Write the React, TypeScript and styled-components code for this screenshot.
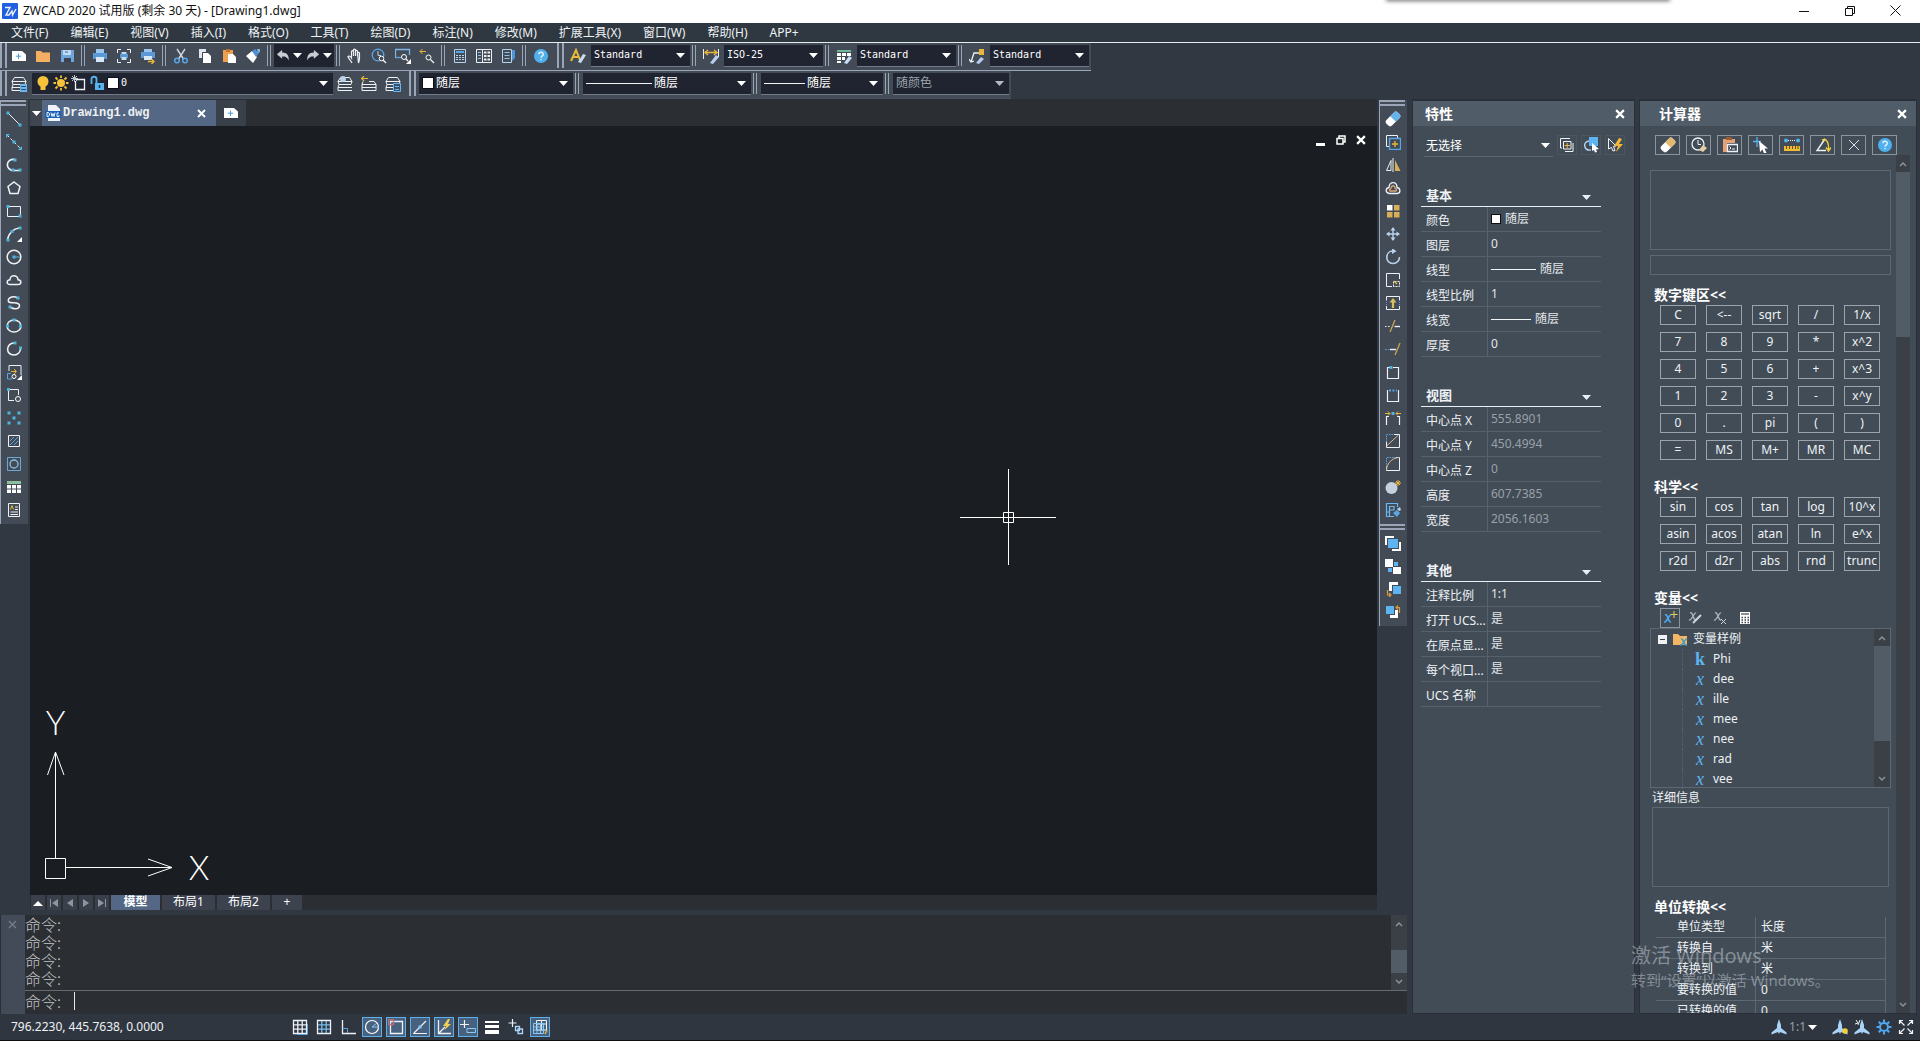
import React from 'react';
import styled, { createGlobalStyle, css } from 'styled-components';

const ui = "'Noto Sans', 'Noto Sans CJK SC', sans-serif";
const mono = "'DejaVu Sans Mono', 'Noto Sans CJK SC', monospace";

const c = {
  frame: '#323842',
  menu: '#2f3840',
  bar: '#434b57',
  field: '#202430',
  grip: '#9aa6b8',
  canvas: '#1a1d22',
  strip: '#2b2e33',
  tab: '#546784',
  panel: '#424c57',
  header: '#505c67',
  line: '#5d6872',
  keyLine: '#9ba4ac',
  text: '#eef2f5',
  dim: '#98a1a9',
  blue: '#5db4f0',
  gold: '#e8b83c',
};

const GlobalStyle = createGlobalStyle`
  *, *::before, *::after { box-sizing: border-box; }
  body { margin: 0; background: ${c.frame}; color: ${c.text}; font: 12px/16px ${ui}; overflow: hidden; }
  button, select, input, textarea { font: inherit; color: inherit; margin: 0; padding: 0; border: 0; background: none; border-radius: 0; outline: 0; }
  svg { display: block; flex: none; }
  ul { list-style: none; margin: 0; padding: 0; }
  h2, h3 { margin: 0; }
`;

/* ---------- drawing helpers ---------- */

type StrokeProps = { d: string; k?: string; w?: number; dash?: string };
const S = ({ d, k = '#eef2f6', w = 1, dash }: StrokeProps) => (
  <path d={d} stroke={k} strokeWidth={w} strokeDasharray={dash} fill="none" />
);
const F = ({ d, k = '#ffffff' }: { d: string; k?: string }) => <path d={d} fill={k} />;
const Dot = ({ x, y, k = '#4fb3dc' }: { x: number; y: number; k?: string }) => (
  <rect x={x - 1.5} y={y - 1.5} width={3} height={3} fill={k} />
);
const Icon = ({ children, size = 16 }: { children: React.ReactNode; size?: number }) => (
  <svg width={size} height={size} viewBox="0 0 16 16" aria-hidden="true">
    {children}
  </svg>
);
const Caret = ({ k = '#ffffff' }: { k?: string }) => (
  <svg width={9} height={5} viewBox="0 0 9 5" aria-hidden="true">
    <path d="M0 0H9L4.5 5Z" fill={k} />
  </svg>
);
const Cross = ({ size = 9, w = 2, k = '#ffffff' }: { size?: number; w?: number; k?: string }) => (
  <svg width={size} height={size} viewBox="0 0 9 9" aria-hidden="true">
    <path d="M1 1L8 8M8 1L1 8" stroke={k} strokeWidth={w} />
  </svg>
);
const Chevron = ({ down }: { down?: boolean }) => (
  <svg width={8} height={6} viewBox="0 0 8 6" aria-hidden="true">
    <path d={down ? 'M1 1L4 4L7 1' : 'M1 5L4 2L7 5'} stroke="#8d959c" strokeWidth={1.4} fill="none" />
  </svg>
);

const layersIcon = (
  <>
    <S d="M3.500 1.500H12.500L15 5.500H1Z M2 8.500H14 M1 5.500L2 8.500L1 11.500 M15 5.500L14 8.500 M1 11.500H15 M1 11.500V14.500H15" />
  </>
);
const helpIcon = (
  <>
    <circle cx={8} cy={8} r={7} fill="#4fb0f0" />
    <S d="M5.800 6.300C5.800 3.500 10.300 3.500 10.300 6.200C10.300 7.900 8 7.800 8 9.800 M8 11V12.300" w={1.4} />
  </>
);

type Tool = [string, React.ReactNode];

const fileTools: Tool[] = [
  ['新建', <><F d="M1 3H11L15 6.500V13H1Z" /><S d="M7.500 5.500V11M4.800 8.200H10.200" k="#4c9fd8" /></>],
  ['打开', <F d="M1 3H6L7.500 4.500H15V14H1Z" k="#f6ae62" />],
  ['保存', <><F d="M2 2H15V14H2Z" k="#6fa4dd" /><F d="M4 2H12V7H4Z" k="#c4d8f0" /><F d="M5 10H12V14H5Z" k="#3a4350" /><F d="M6 3H9V5H6Z" k="#6fa4dd" /></>],
];
const printTools: Tool[] = [
  ['打印', <><F d="M4 1H12V5H4Z" k="#9cc6ee" /><F d="M1 5H15V11H1Z" k="#5b98d8" /><F d="M4 9H12V14H4Z" k="#d8e7f5" /></>],
  ['打印预览', <><S d="M1.500 5V1.500H5M11 1.500H14.500V5M14.500 11V14.500H11M5 14.500H1.500V11" /><F d="M4 6H12V10H4Z" k="#5b98d8" /><F d="M5.500 4H10.500V6H5.500ZM5.500 9H10.500V12H5.500Z" k="#c4dcf2" /></>],
  ['发布', <><F d="M4 1H12V4H4Z" k="#9cc6ee" /><F d="M1 4H15V10H1Z" k="#5b98d8" /><F d="M4 8H12V12H4Z" k="#d8e7f5" /><S d="M8 13.500H14M11.500 11L14 13.500L11.500 16" k={c.gold} w={1.4} /></>],
];
const editTools: Tool[] = [
  ['剪切', <><S d="M4 1L10.500 11M12 1L5.500 11" k="#cfd8e2" w={1.4} /><circle cx={4} cy={12.500} r={2.300} fill="none" stroke="#58a7e6" strokeWidth={1.500} /><circle cx={12} cy={12.500} r={2.300} fill="none" stroke="#58a7e6" strokeWidth={1.500} /></>],
  ['复制', <><F d="M2 1H9V10H2Z" k="#dfe6ee" /><F d="M6 5H11L14 8V15H6Z" /><S d="M5.500 15V4.500H11" k="#3d4652" /></>],
  ['粘贴', <><F d="M2 2H12V14H2Z" k="#ef9f4e" /><F d="M5 1H9V4H5Z" k="#b87636" /><F d="M7 6H12L15 9V15H7Z" /></>],
  ['特性匹配', <><F d="M1 8L7 3L12 9L8 15Z" /><F d="M7 3L10 1L14 5L11 9Z" k="#4f8fd6" /><F d="M12 1H15V4L13 5Z" k="#7db5ea" /></>],
];
const viewTools: Tool[] = [
  ['平移', <S d="M5 15C3.500 12 1.500 10.500 1 8.500C2 7.500 3.500 8.500 4.500 10V3.500C5 2.300 6.500 2.300 6.500 3.500V8M6.500 3V2C7 .700 8.500 .700 8.500 2V8M8.500 3C9 2 10.500 2 10.500 3.500V8M10.500 5C11 4 12.500 4 12.500 5.500V10C12.500 12.500 12 13.500 11.500 15Z" w={1.2} />],
  ['实时缩放', <><circle cx={7} cy={7} r={5.800} fill="none" stroke="#58a7e6" strokeWidth={1.300} /><S d="M7 3V7.500H10" k="#b9d2ec" /><circle cx={10.500} cy={10.500} r={2.300} fill="#434b57" stroke="#fff" /><S d="M12 12L15 15" w={1.400} /></>],
  ['窗口缩放', <><S d="M1 9.500H.500V1.500H14.500V7" k="#7cb8ea" w={1.300} /><S d="M.500 9.500H6" k="#58a7e6" w={1.300} /><circle cx={9} cy={9} r={2.500} fill="none" stroke="#fff" /><S d="M10.800 10.800L13 13" w={1.300} /><F d="M16 11V16H11Z" /></>],
  ['缩放上一个', <><S d="M1 3.500H7M3.500 1L1 3.500L3.500 6" k={c.gold} /><circle cx={9.500} cy={9.500} r={2.500} fill="none" stroke="#fff" /><S d="M11.500 11.500L15 15" w={1.300} /></>],
];
const paletteTools: Tool[] = [
  ['计算器', <><S d="M2.500 1.500H13.500V14.500H2.500Z" k="#b9d2ec" /><F d="M4 3H12V5H4Z" k="#58a7e6" /><S d="M4 7.500H12M4 9.500H12M4 11.500H12" k="#b9d2ec" dash="2 1" /></>],
  ['设计中心', <><S d="M.500 1.500H15.500V14.500H.500ZM6.500 1.500V14.500" /><S d="M2 4.500H5M2 7.500H5M2 10.500H5" k="#8fc4ea" /><S d="M8 4.500H14M8 8H14M8 11.500H14" dash="2.500 1" w={2} /></>],
  ['工具选项板', <><S d="M2.500 1.500H11.500V14.500H2.500Z" k="#b9d2ec" /><S d="M4.500 4.500H9.500M4.500 7.500H9.500M4.500 10.500H9.500" k="#8fc4ea" /><F d="M12 2H15V10L12 13Z" k="#4f95da" /></>],
];

const drawTools: Tool[] = [
  ['直线', <><S d="M2 2L14 14" /><Dot x={2} y={2} /><Dot x={14} y={14} /></>],
  ['构造线', <><S d="M1 1L15 15" dash="3 2" /><F d="M0 0H4L0 4ZM16 16H12L16 12Z" k="#4fb3dc" /><Dot x={8} y={8} /></>],
  ['多段线', <><S d="M9 2.500C-1 1 -1 13.500 8 13.500H14" w={1.600} /><Dot x={9} y={3} /><Dot x={14} y={13} /><Dot x={7} y={13} /></>],
  ['正多边形', <S d="M8 2L14 6.500L12 13.500H4L2 6.500Z" w={1.5} />],
  ['矩形', <><S d="M1.500 3.500H14.500V13.500H1.500Z" /><Dot x={2} y={3.500} /><Dot x={14} y={13} /></>],
  ['圆弧', <><S d="M1.500 14C2 8 7 2.500 14 2" w={1.500} /><Dot x={2} y={14} /><Dot x={6} y={5.500} /><Dot x={14} y={2} /><F d="M16 11V16H11Z" /></>],
  ['圆', <><circle cx={8} cy={8} r={6.800} fill="none" stroke="#eef2f6" strokeWidth={1.500} /><Dot x={8} y={8} /><S d="M9 8H14" k="#4fb3dc" /></>],
  ['修订云线', <S d="M4 12.500C0 12.500 .500 8 4 7.800C4 2.500 11.500 2.500 12 7.800C15.800 8 15.800 12.500 12 12.500Z" w={1.5} />],
  ['样条曲线', <><S d="M12 3C6 0 1 3.500 2.500 6.500C4 9 13.500 6.500 13.500 10.500C13.500 14.500 8 14.500 4 12" w={1.500} /><Dot x={12} y={3} /><Dot x={4} y={12} /></>],
  ['椭圆', <><ellipse cx={8} cy={8} rx={7} ry={6} fill="none" stroke="#eef2f6" strokeWidth={1.500} /><Dot x={1.500} y={8} /><Dot x={14.500} y={8} /><Dot x={8} y={2} /></>],
  ['椭圆弧', <><S d="M8 2C0 2 -1 14 8 14C12 14 14.500 11 14.500 7.500" w={1.500} /><Dot x={9} y={2} /><Dot x={14.500} y={7} /></>],
  ['插入块', <><S d="M3 7V1.500H15V11" /><S d="M6 15H1.500V9.500H5" k="#58a7e6" /><S d="M5 7.500H10M8 5L10.500 7.500L8 10" k={c.gold} /><circle cx={8} cy={12.500} r={2} fill="none" stroke="#fff" /><F d="M16 11V16H11Z" /></>],
  ['创建块', <><S d="M2.500 2.500H12.500V8M2.500 2.500V13.500H8" /><circle cx={12} cy={12} r={2.500} fill="none" stroke="#fff" /><Dot x={2.500} y={2.500} /></>],
  ['点', <>{[[3, 3], [13, 3], [8, 8], [3, 13], [13, 13]].map(([x, y]) => <Dot key={`${x}${y}`} x={x} y={y} />)}</>],
  ['填充', <><S d="M2.500 2.500H13.500V13.500H2.500Z" /><S d="M4 8L8 4M4 12L12 4M8 12L12 8" k="#58a7e6" /></>],
  ['面域', <><S d="M1.500 1.500H14.500V14.500H1.500Z" k="#6ba6d6" /><circle cx={8} cy={8} r={4} fill="none" stroke="#8cc0e8" strokeWidth={1.300} /></>],
  ['表格', <><F d="M1 2H15V5H1Z" k="#8dbf9d" /><F d="M1 6H5V9.500H1ZM6 6H10V9.500H6ZM11 6H15V9.500H11ZM1 10.500H5V14H1ZM6 10.500H10V14H6ZM11 10.500H15V14H11Z" /></>],
  ['多行文字', <><S d="M2.500 1.500H13.500V14.500H2.500Z" /><S d="M4.500 7.500L6 3.500L7.500 7.500" k={c.gold} /><S d="M9 5H12M9 7.500H12M4.500 10H12M4.500 12.500H12" /></>],
];

const modifyTools: Tool[] = [
  ['删除', <g transform="rotate(-45 8 8)"><rect x={0} y={4} width={16} height={8} rx={3} fill="#fff" /><path d="M8 4H13Q16 4 16 7V9Q16 12 13 12H8Z" fill="#68b2ec" /></g>],
  ['复制对象', <><S d="M4 12.500H1.500V1.500H12.500V4" /><S d="M4.500 4.500H15.500V15.500H4.500Z" k="#58a7e6" w={1.300} /><S d="M10 7V13M7 10H13" k={c.gold} w={1.300} /></>],
  ['镜像', <><S d="M6 3.500V13.500H1.500Z" /><S d="M8 1V15" /><F d="M10 3V14H15.500Z" k="#d8ae56" /></>],
  ['偏移', <><S d="M4 13.500C0 12.500 .500 8 4 7.500C4 1 12 1 12 7.500C15.500 8 16 13 12.500 13.500Z" w={1.300} /><S d="M5 11C3.500 9.500 6 9 6 8C6.500 5 9.500 5 10 8C10.500 9 12.500 9.500 11 11Z" k="#e0a870" w={1.300} /></>],
  ['阵列', <><F d="M2 2H7.500V7.500H2Z" /><F d="M9 2H14.500V7.500H9ZM2 9H7.500V14.500H2ZM9 9H14.500V14.500H9Z" k="#d8ae56" /></>],
  ['移动', <><S d="M8 2V14M2 8H14" k="#b9d2ec" w={1.400} /><F d="M8 1L10.500 4.500H5.500ZM8 15L10.500 11.500H5.500ZM1 8L4.500 5.500V10.500ZM15 8L11.500 5.500V10.500Z" k="#b9d2ec" /></>],
  ['旋转', <><S d="M8 2C0 2 -.500 14.500 8 14.500C12 14.500 14.500 11.500 14.500 8" k="#b9d2ec" w={1.600} /><F d="M7 -1L11.500 2.200L7 5Z" k="#b9d2ec" /></>],
  ['缩放', <><S d="M7 14.500H1.500V1.500H14.500V7" /><S d="M8.500 14.500V9.500H14.500V14.500Z" dash="2 1" /><S d="M9 9L12 12" k={c.gold} w={1.400} /></>],
  ['拉伸', <><S d="M1.500 5V1.500H14.500V5M1.500 11V14.500H14.500V11" /><S d="M1.500 5V11M14.500 5V11" k="#6f90ff" dash="1 1" /><S d="M8 13V6" k="#d8c060" w={2.200} /><F d="M8 3L11.500 7.500H4.500Z" k="#d8c060" /></>],
  ['修剪', <><S d="M5 14L10 2" k="#c8a455" w={1.300} /><S d="M0 8.500H6" dash="1.500 1.500" /><S d="M9.500 8.500H15" w={1.400} /></>],
  ['延伸', <><S d="M10 14L15 2" k="#c8a455" w={1.300} /><S d="M0 8.500H5" dash="1.500 1.500" k="#58a7e6" /><S d="M5 8.500H11" w={1.400} /></>],
  ['打断于点', <><S d="M5 3.500H2.500V14.500H13.500V3.500H8" w={1.200} /><Dot x={6} y={3.500} /></>],
  ['打断', <><S d="M3 3.500H2.500V14.500H13.500V3.500H13" w={1.200} /><S d="M4 3.500H12" k="#58a7e6" w={2} dash="2 1.500" /></>],
  ['合并', <><S d="M1.500 15V6.500H4M14.500 15V6.500H12" w={1.200} /><S d="M0 3.500H5M3 1.500L5 3.500L3 5.500M16 3.500H11M13 1.500L11 3.500L13 5.500" k={c.gold} /><Dot x={8} y={3.500} /></>],
  ['倒角', <><S d="M1.500 9V14.500H14.500V1.500H9" /><S d="M1.500 9V1.500H9" k="#58a7e6" dash="1.500 1" /><S d="M1.500 13L13.500 2" k="#d9b9a0" /></>],
  ['圆角', <><S d="M1.500 11V14.500H14.500V1.500H11" /><S d="M1.500 11V1.500H11" k="#58a7e6" dash="1.500 1" /><S d="M1.500 14C2 7 7 2 14 1.500" k="#e0b48a" /></>],
  ['分解', <><circle cx={6.500} cy={9} r={6} fill="#c4d0de" /><S d="M13 1V7M10 4H16M11 2L15 6M15 2L11 6" k={c.gold} /></>],
  ['编辑块', <><S d="M9 14.500H1.500V1.500H12.500V5M1.500 10H4.500M4.500 14V4.500H9V8H4.500" k="#6db6ef" w={1.200} /><F d="M8 11L12 8L15 11L12 15Z" k="#58a7e6" /><F d="M12 7L15 5L16 8L14 9Z" k="#b9d2ec" /></>],
];

const orderTools: Tool[] = [
  ['前置', <><F d="M0 1H9V3H2V10H0Z" /><F d="M3 4H13V13H3Z" k="#5db4f0" /><F d="M14 7H16V16H7V14H14Z" /></>],
  ['后置', <><F d="M0 1H8V9H0ZM8 9H16V16H8Z" /><F d="M9 4H13V8H9ZM3 10H7V14H3Z" k="#5db4f0" /></>],
  ['置于对象之上', <><F d="M4 1H13V4H7V10H4Z" /><F d="M8 5H16V13H8Z" k="#5db4f0" /><S d="M2.500 9V14H6M4 12L6 14L4 16" k="#d99a3e" w={1.200} /></>],
  ['置于对象之下', <><F d="M1 2H9V10H1Z" k="#5db4f0" /><F d="M10 6H13V14H5V11H10Z" /><S d="M14.500 9V3.500H11M13 1.500L11 3.500L13 5.500" k="#d99a3e" w={1.200} /></>],
];

const calcTools: Tool[] = [
  ['清除', <g transform="rotate(-45 8 8)"><rect x={0} y={4} width={16} height={8} rx={3} fill="#fff" /><path d="M8 4H13Q16 4 16 7V9Q16 12 13 12H8Z" fill="#e0b870" /></g>],
  ['清除历史记录', <><circle cx={7} cy={7} r={6} fill="none" stroke="#eef2f6" strokeWidth={1.300} /><S d="M7 3V7.500H10" /><F d="M8 13L12 8L16 11L12 15Z" k="#e3cfa6" /></>],
  ['粘贴到命令行', <><F d="M1 2H13V6H5V15H1Z" k="#e5a274" /><F d="M4 0H10V3H4Z" k="#9a5c34" /><S d="M5.500 7.500H15.500V14.500H5.500Z" w={1.300} /><S d="M7.500 9.500L9 11L7.500 12.500M10 12H13" /></>],
  ['获取坐标', <><S d="M4 0V10M0 4.500H8" k="#58b4ef" w={1.300} /><F d="M6 4L15 11.500L11.500 11.500L13.500 16L11 16.500L9.500 12.500L7 15Z" /></>],
  ['两点距离', <><circle cx={2} cy={3.500} r={2} fill="#4fb3ec" /><circle cx={14} cy={3.500} r={2} fill="#4fb3ec" /><S d="M4 3.500H12" dash="1 1" /><F d="M0 9H16V14H0Z" k="#f0bb35" /><S d="M2.500 9V12M5.500 9V12M8.500 9V12M11.500 9V12M14 9V12" k="#6a5020" /></>],
  ['角度', <><S d="M10 2L2 13.500H11M10 2L7 6" w={1.400} /><S d="M7 3C12 1 14 6 13.500 13M11 10.500L13.500 14L16 10.500" k="#f0cf3a" w={1.400} /></>],
  ['交点', <S d="M3 3L13 13M13 3L3 13" k="#cfe4f5" />],
  ['帮助', helpIcon],
];

const snapTools: [string, boolean, React.ReactNode][] = [
  ['捕捉', false, <><S d="M1.500 1.500H14.500V14.500H1.500ZM5.800 1V15M10.200 1V15M1 5.800H15M1 10.200H15" w={1.300} /><S d="M15.500 5V15.500H5" k="#58a7e6" /></>],
  ['栅格', false, <><S d="M1.500 1.500H14.500V14.500H1.500Z" w={1.300} /><S d="M5.800 2V14M10.200 2V14M2 5.800H14M2 10.200H14" k="#7cbcf0" w={1.300} /></>],
  ['正交', false, <><S d="M2.500 1V14.500H16" w={1.300} /><S d="M2.500 9.500H7.500V14" k="#58a7e6" /></>],
  ['极轴', true, <><circle cx={8} cy={8} r={6.500} fill="none" stroke="#fff" strokeWidth={1.200} /><S d="M8 8H15M8 8L13 4" k="#8cc8f5" /></>],
  ['对象捕捉', true, <><S d="M2.500 2.500H14.500V14.500H2.500Z" w={1.300} /><S d="M.500 .500H5.500V5.500H.500Z" k="#c06a78" w={1.300} /></>],
  ['对象追踪', true, <><S d="M1 14.500H15M2 14L14 2" w={1.200} /><Dot x={8} y={8} k="#8cc8f5" /></>],
  ['动态UCS', true, <><S d="M2.500 1V14.500H15M2.500 14.500L9 8" w={1.300} /><F d="M12 0L7 7H10L8.500 11L15 5H12L14 0Z" k="#f2cf4a" /></>],
  ['动态输入', true, <><S d="M4.500 1V9M0 5.500H9" w={1.200} /><S d="M7 9.500H15.500V13.500H7Z" k="#8cc8f5" /></>],
  ['线宽', false, <><F d="M1 2H15V4H1ZM1 6H15V9H1ZM1 11H15V15H1Z" /></>],
  ['循环选择', false, <><S d="M4.500 0V8M.500 4H8.500" w={1.200} /><S d="M7.500 7.500H11.500V11.500H7.500ZM10 10H14.500V14.500H10Z" k="#a8d4f5" w={1.300} /></>],
  ['注释监视器', true, <><S d="M4.500 1.500H14.500V11H4.500ZM4.500 5H14.500M9.500 1.500V11" /><S d="M1.500 4.500H11.500V14.500H1.500ZM1.500 8H11.500M1.500 11H11.500M5 4.500V14.500M8.500 4.500V14.500" k="#8cc8f5" /><S d="M15 11L13 15" k={c.gold} w={1.400} /></>],
];

const annotate = <F d="M8 0L10 6L10 9L15.500 13.500V15.500L9 13L8 15L7 13L.500 15.500V13.500L6 9V6Z" k="#a9d4f7" />;

/* ---------- window chrome ---------- */

const Shell = styled.div`
  display: flex;
  flex-direction: column;
  height: 100vh;
`;

const TitleBar = styled.header`
  position: relative;
  display: flex;
  align-items: center;
  height: 23px;
  padding: 0 4px 2px 2px;
  gap: 5px;
  background: #ffffff;
  color: #101010;
`;
const TitleText = styled.span`
  flex: 1;
`;
const WindowButton = styled.button`
  display: flex;
  align-items: center;
  justify-content: center;
  width: 41px;
  height: 19px;
`;
const WindowShadow = styled.div`
  position: absolute;
  top: -4px;
  right: 250px;
  width: 284px;
  height: 4px;
  box-shadow: 0 1px 4px rgba(0, 0, 0, 0.6);
`;

const MenuBar = styled.nav`
  display: flex;
  height: 20px;
  background: ${c.menu};
  border-bottom: 1px solid #e6ebef;
`;
const MenuItem = styled.button`
  padding: 0 11px;
  line-height: 18px;
`;

const ToolRow = styled.div`
  display: flex;
  height: 28px;
`;
const ToolGroup = styled.div<{ $line?: boolean }>`
  display: flex;
  align-items: center;
  padding: 0 2px 2px 0;
  background: ${c.bar};
  border-bottom: 1px solid ${(p) => (p.$line ? c.grip : '#4b525f')};
`;
const Grip = styled.i<{ $gap?: boolean }>`
  width: 7px;
  height: 25px;
  margin: ${(p) => (p.$gap ? '0 2px 0 4px' : '0')};
  border: solid ${c.grip};
  border-width: 0 2px;
`;
const Divider = styled.i`
  width: 4px;
  height: 21px;
  margin: 0 3px 0 2px;
  border: solid ${c.grip};
  border-width: 0 1px;
`;
const ToolButton = styled.button`
  display: flex;
  align-items: center;
  justify-content: center;
  width: 24px;
  height: 23px;
`;
const UndoGroup = styled.div`
  display: flex;
  align-items: center;
  justify-content: space-around;
  width: 60px;
  height: 23px;
  background: #1f2330;
`;
const PlainButton = styled.button`
  display: flex;
  align-items: center;
`;

const Combo = styled.label<{ $w: number }>`
  position: relative;
  display: flex;
  align-items: center;
  gap: 2px;
  width: ${(p) => p.$w}px;
  height: 22px;
  margin-left: 1px;
  padding-left: 3px;
  background: ${c.field};
  border-bottom: 1px solid #737b88;
`;
const Choice = styled.select<{ $code?: boolean; $dim?: boolean }>`
  flex: 1;
  min-width: 0;
  height: 20px;
  appearance: none;
  font-family: ${(p) => (p.$code ? mono : ui)};
  font-size: ${(p) => (p.$code ? 10 : 12)}px;
  color: ${(p) => (p.$dim ? c.dim : '#ffffff')};
`;
const CaretSlot = styled.span`
  position: absolute;
  right: 5px;
  top: 8px;
  pointer-events: none;
`;
const Swatch = styled.i`
  width: 12px;
  height: 12px;
  background: #ffffff;
  border: 1px solid #0c0e12;
`;
const LineSample = styled.i<{ $w: number }>`
  width: ${(p) => p.$w}px;
  height: 1px;
  background: #f2f5f7;
`;

type PickerProps = { name: string; w: number; value: string; code?: boolean; dim?: boolean; children?: React.ReactNode };
const Picker = ({ name, w, value, code, dim, children }: PickerProps) => (
  <Combo $w={w}>
    {children}
    <Choice aria-label={name} $code={code} $dim={dim}>
      <option>{value}</option>
    </Choice>
    <CaretSlot>
      <Caret k={dim ? '#b4bac2' : '#ffffff'} />
    </CaretSlot>
  </Combo>
);

const Tools = ({ items }: { items: Tool[] }) => (
  <>
    {items.map(([name, art]) => (
      <ToolButton key={name} title={name}>
        <Icon>{art}</Icon>
      </ToolButton>
    ))}
  </>
);

/* ---------- main area ---------- */

const Main = styled.div`
  flex: 1;
  min-height: 0;
  display: flex;
  gap: 6px;
  padding: 0 4px 0 0;
`;
const Workspace = styled.div`
  flex: 1;
  min-width: 0;
  display: flex;
  flex-direction: column;
`;
const DrawArea = styled.div`
  flex: 1;
  min-height: 0;
  display: flex;
`;
const Side = styled.aside<{ $indent?: boolean }>`
  width: 30px;
  padding-left: ${(p) => (p.$indent ? 2 : 0)}px;
`;
const SideTools = styled.div`
  display: flex;
  flex-direction: column;
  align-items: center;
  width: 28px;
  padding: 0 2px 3px 0;
  background: ${c.bar};
  border-left: 1px solid ${c.grip};
  margin-top: 1px;
`;
const SideGrip = styled.i<{ $gap?: boolean }>`
  align-self: stretch;
  height: 6px;
  margin: ${(p) => (p.$gap ? 3 : 0)}px 0 1px;
  border: solid ${c.grip};
  border-width: 2px 0;
`;
const SideButton = styled.button`
  display: flex;
  align-items: center;
  justify-content: center;
  width: 23px;
  height: 23px;
`;
const Document = styled.section`
  flex: 1;
  min-width: 0;
  display: flex;
  flex-direction: column;
`;
const TabStrip = styled.div`
  display: flex;
  height: 27px;
  padding-top: 1px;
  background: ${c.strip};
`;
const TabMenu = styled.button`
  width: 12px;
  display: flex;
  align-items: center;
  justify-content: center;
  background: #3f4650;
`;
const FileTab = styled.button`
  display: flex;
  align-items: center;
  gap: 2px;
  width: 174px;
  padding: 0 10px 0 3px;
  background: ${c.tab};
  font: bold 12px/24px 'Liberation Mono', monospace;
  text-align: left;
`;
const FileName = styled.span`
  flex: 1;
`;
const NewTab = styled.button`
  display: flex;
  align-items: center;
  justify-content: center;
  width: 30px;
  background: #3a404a;
`;
const Canvas = styled.div`
  position: relative;
  flex: 1;
  min-height: 0;
  overflow: hidden;
  background: ${c.canvas};
`;
const CanvasButtons = styled.div`
  position: absolute;
  top: 8px;
  right: 11px;
  display: flex;
  gap: 10px;
  align-items: center;
`;
const Crosshair = styled.svg`
  position: absolute;
  left: 930px;
  top: 343px;
`;
const UcsMark = styled.svg`
  position: absolute;
  left: 10px;
  bottom: 9px;
  font-family: Lato, sans-serif;
  font-weight: 300;
`;
const LayoutTabs = styled.div`
  display: flex;
  gap: 2px;
  height: 15px;
  padding-left: 1px;
  background: ${c.strip};
`;
const NavButton = styled.button`
  display: flex;
  align-items: center;
  justify-content: center;
  width: 14px;
  background: #3a404b;
`;
const LayoutTab = styled.button<{ $active?: boolean; $w: number }>`
  display: flex;
  justify-content: center;
  width: ${(p) => p.$w}px;
  line-height: 13px;
  color: #ffffff;
  background: ${(p) => (p.$active ? c.tab : '#3c434f')};
  font-weight: ${(p) => (p.$active ? 700 : 400)};
`;

const CommandPanel = styled.section`
  display: flex;
  height: 99px;
  margin-top: 5px;
  padding-left: 1px;
  background: ${c.strip};
`;
const CommandHandle = styled.div`
  width: 24px;
  padding: 5px 0 0 7px;
  background: #434b59;
`;
const CommandBody = styled.div`
  flex: 1;
  display: flex;
  flex-direction: column;
  font: 300 16px/18px 'Noto Sans CJK SC', sans-serif;
  color: #c3c6c9;
`;
const CommandLog = styled.div`
  flex: 1;
  display: flex;
  border-bottom: 1px solid #666a6f;
`;
const CommandLines = styled.ul`
  flex: 1;
`;
const CommandInput = styled.label`
  display: flex;
  align-items: center;
  gap: 13px;
  height: 23px;
  padding-bottom: 3px;
`;
const CommandField = styled.input`
  flex: 1;
  height: 18px;
  border-left: 1px solid #e6e8ea;
`;

const Scroll = styled.div<{ $w: number }>`
  display: flex;
  flex-direction: column;
  align-items: center;
  width: ${(p) => p.$w}px;
  background: #3b4046;
`;
const ScrollEnd = styled.button`
  display: flex;
  align-items: center;
  justify-content: center;
  width: 100%;
  height: 17px;
`;
const Thumb = styled.div<{ $h: number; $top?: number }>`
  width: 100%;
  height: ${(p) => p.$h}px;
  margin: ${(p) => p.$top || 0}px 0 auto;
  background: #525c66;
`;

/* ---------- palettes ---------- */

const Palette = styled.section<{ $w: number }>`
  display: flex;
  flex-direction: column;
  width: ${(p) => p.$w}px;
  margin: 1px 0 1px;
  background: ${c.panel};
  border-top: 1px solid #2a303a;
  box-shadow: 0 0 0 1px #2a303a;
`;
const PaletteHeader = styled.header<{ $indent: number }>`
  display: flex;
  align-items: center;
  justify-content: space-between;
  height: 25px;
  padding: 0 9px 0 ${(p) => p.$indent}px;
  background: ${c.header};
`;
const PaletteTitle = styled.h2`
  font: 700 14px/20px ${ui};
  color: #ffffff;
`;

const SelectionRow = styled.div`
  display: flex;
  align-items: center;
  gap: 4px;
  height: 25px;
  margin: 6px 9px 0 11px;
`;
const SelectionCombo = styled(Combo)`
  flex: 1;
  height: 25px;
  margin: 0;
  padding: 3px 0 0 2px;
  background: none;
  border-color: ${c.line};
`;
const SelectionCaret = styled(CaretSlot)`
  top: 11px;
  right: 3px;
`;
const SmallButton = styled.button`
  display: flex;
  align-items: center;
  justify-content: center;
  width: 20px;
  height: 20px;
  border: 1px solid #4b5661;
`;
const Group = styled.div`
  width: 180px;
  margin-left: 8px;
`;
const GroupHeading = styled.h3`
  display: flex;
  align-items: flex-end;
  justify-content: space-between;
  height: 50px;
  padding: 0 10px 2px 5px;
  border-bottom: 1px solid #e8f0f6;
  font: 700 13px/17px ${ui};
`;
const GroupToggle = styled.button`
  padding-bottom: 4px;
`;
const PropTable = styled.table`
  width: 100%;
  table-layout: fixed;
  border-spacing: 0;
`;
const PropName = styled.th`
  width: 67px;
  height: 25px;
  padding: 4px 0 0 5px;
  font-weight: 400;
  text-align: left;
  white-space: nowrap;
  overflow: hidden;
  border: solid #56616c;
  border-width: 0 1px 1px 0;
`;
const PropValue = styled.td<{ $dim?: boolean }>`
  height: 25px;
  padding: 0 0 0 3px;
  color: ${(p) => (p.$dim ? c.dim : '#e2e7eb')};
  border-bottom: 1px solid #56616c;
`;
const ValueRow = styled.span`
  display: flex;
  align-items: center;
  gap: 4px;
`;
const SmallSwatch = styled(Swatch)`
  width: 10px;
  height: 10px;
`;

const CalcTools = styled.div`
  display: flex;
  gap: 6px;
  margin: 9px 0 0 15px;
`;
const CalcTool = styled.button`
  display: flex;
  align-items: center;
  justify-content: center;
  width: 25px;
  height: 20px;
  border: 1px solid #8c959d;
`;
const CalcBody = styled.div`
  flex: 1;
  min-height: 0;
  display: flex;
  justify-content: space-between;
  padding: 0 6px 0 10px;
  overflow: hidden;
`;
const CalcColumn = styled.div`
  width: 241px;
  height: 0;
  padding-top: 15px;
`;
const History = styled.textarea`
  display: block;
  width: 100%;
  height: 80px;
  margin-bottom: 5px;
  resize: none;
  border: 1px solid ${c.line};
`;
const Expression = styled.input`
  display: block;
  width: 100%;
  height: 20px;
  border: 1px solid ${c.line};
`;
const CalcHeading = styled.h3<{ $top: number }>`
  margin: ${(p) => p.$top}px 0 0 4px;
  font: 700 14px/20px ${ui};
  color: #ffffff;
`;
const Keys = styled.div`
  display: grid;
  grid-template-columns: repeat(5, 36px);
  gap: 7px 10px;
  padding-left: 10px;
`;
const Key = styled.button`
  height: 20px;
  line-height: 16px;
  border: 1px solid ${c.keyLine};
  white-space: nowrap;
`;
const VarTools = styled.div`
  display: flex;
  gap: 5px;
  padding-left: 10px;
`;
const VarTool = styled.button<{ $on?: boolean }>`
  display: flex;
  align-items: center;
  justify-content: center;
  width: 20px;
  height: 20px;
  border: 1px solid ${(p) => (p.$on ? '#8c959d' : 'transparent')};
`;
const TreeBox = styled.div`
  display: flex;
  height: 160px;
  border: 1px solid ${c.line};
`;
const Tree = styled.ul`
  flex: 1;
`;
const TreeRoot = styled.li`
  display: flex;
  align-items: center;
  gap: 5px;
  height: 20px;
  padding-left: 7px;
`;
const TreeLeaf = styled.li`
  display: flex;
  align-items: center;
  gap: 7px;
  height: 20px;
  margin-left: 31px;
  padding-left: 11px;
  border-left: 1px dotted #56626d;
`;
const VarGlyph = styled.i<{ $bold?: boolean }>`
  width: 12px;
  text-align: center;
  font: ${(p) => (p.$bold ? 'normal 700' : 'italic 400')} 18px/18px 'Liberation Serif', serif;
  color: ${c.blue};
`;
const Detail = styled.label`
  display: block;
  padding: 0 2px;
  line-height: 19px;
`;
const UnitTable = styled.table`
  width: 230px;
  margin-left: 6px;
  border-spacing: 0;
  border-right: 1px solid ${c.line};
`;
const UnitName = styled.th`
  width: 100px;
  height: 21px;
  padding: 0 0 0 21px;
  font-weight: 400;
  text-align: left;
  border: solid ${c.line};
  border-width: 0 1px 1px 0;
`;
const UnitValue = styled.td`
  padding: 0 0 0 5px;
  border-bottom: 1px solid ${c.line};
`;
const Watermark = styled.div`
  position: absolute;
  right: 92px;
  bottom: 50px;
  width: 197px;
  white-space: nowrap;
  color: rgba(190, 196, 202, 0.55);
  font-size: 15px;
  line-height: 22px;
  pointer-events: none;
`;
const WatermarkTitle = styled.div`
  font-size: 20px;
  line-height: 26px;
`;

/* ---------- status bar ---------- */

const StatusBar = styled.footer`
  display: flex;
  align-items: center;
  height: 27px;
  padding: 0 6px 0 11px;
  background: #2f3640;
  border-bottom: 1px solid #0c0e11;
`;
const Coordinates = styled.output`
  width: 279px;
`;
const SnapGroup = styled.div`
  flex: 1;
  display: flex;
  gap: 4px;
`;
const SnapButton = styled.button<{ $on: boolean }>`
  display: flex;
  align-items: center;
  justify-content: center;
  width: 20px;
  height: 20px;
  ${(p) => p.$on && css`
    background: #47617f;
    border: 1px solid #5fb0e8;
  `}
`;
const StatusTools = styled.div`
  display: flex;
  align-items: center;
  gap: 6px;
`;
const ScaleGroup = styled.div`
  display: flex;
  align-items: center;
  gap: 2px;
  margin-right: 9px;
`;
const ScaleButton = styled.button`
  display: flex;
  align-items: center;
  gap: 2px;
  color: ${c.dim};
`;

/* ---------- data ---------- */

const menus = ['文件(F)', '编辑(E)', '视图(V)', '插入(I)', '格式(O)', '工具(T)', '绘图(D)', '标注(N)', '修改(M)', '扩展工具(X)', '窗口(W)', '帮助(H)', 'APP+'];

type Prop = { name: string; value: string; swatch?: boolean; line?: number };
const groups: { title: string; dim?: boolean; rows: Prop[] }[] = [
  {
    title: '基本',
    rows: [
      { name: '颜色', value: '随层', swatch: true },
      { name: '图层', value: '0' },
      { name: '线型', value: '随层', line: 45 },
      { name: '线型比例', value: '1' },
      { name: '线宽', value: '随层', line: 40 },
      { name: '厚度', value: '0' },
    ],
  },
  {
    title: '视图',
    dim: true,
    rows: [
      { name: '中心点 X', value: '555.8901' },
      { name: '中心点 Y', value: '450.4994' },
      { name: '中心点 Z', value: '0' },
      { name: '高度', value: '607.7385' },
      { name: '宽度', value: '2056.1603' },
    ],
  },
  {
    title: '其他',
    rows: [
      { name: '注释比例', value: '1:1' },
      { name: '打开 UCS...', value: '是' },
      { name: '在原点显...', value: '是' },
      { name: '每个视口...', value: '是' },
      { name: 'UCS 名称', value: '' },
    ],
  },
];

const numberKeys = ['C', '<--', 'sqrt', '/', '1/x', '7', '8', '9', '*', 'x^2', '4', '5', '6', '+', 'x^3', '1', '2', '3', '-', 'x^y', '0', '.', 'pi', '(', ')', '=', 'MS', 'M+', 'MR', 'MC'];
const scienceKeys = ['sin', 'cos', 'tan', 'log', '10^x', 'asin', 'acos', 'atan', 'ln', 'e^x', 'r2d', 'd2r', 'abs', 'rnd', 'trunc'];
const variables = ['Phi', 'dee', 'ille', 'mee', 'nee', 'rad', 'vee'];
const units = [['单位类型', '长度'], ['转换自', '米'], ['转换到', '米'], ['要转换的值', '0'], ['已转换的值', '0']];

const styleNames = ['文字样式', '标注样式', '表格样式', '引线样式'];
const styleIcons = [
  <><S d="M1 13L6 2L10 12M3 9H9" k={c.gold} w={2} /><F d="M8 14L13 6L16 7L11 15Z" k="#c9dcf2" /></>,
  <><S d="M.500 1V11M15.500 1V9" /><S d="M2 4.500H14M5 2L2 4.500L5 7M11 2L14 4.500L11 7" k={c.gold} w={1.400} /><F d="M7 15L13 7L16 9L10 16Z" k="#b9cdf0" /></>,
  <><F d="M1 2H15V4H1Z" k="#6fb897" /><F d="M1 5H5V8H1ZM6 5H10V8H6ZM11 5H15V8H11ZM1 9H5V12H1ZM6 9H9V12H6ZM1 13H5V15H1Z" /><F d="M8 15L13 8L16 10L11 16Z" k="#c9dcf2" /></>,
  <><S d="M2 14L5 5H10M0 11L2 14L5 13" w={1.300} /><F d="M10 1H15V7H10Z" k={c.gold} /><F d="M7 15L12 9L15 11L10 16Z" k="#b9cdf0" /></>,
];

/* ---------- sections ---------- */

const StandardRow = () => (
  <ToolRow>
    <ToolGroup $line>
      <Grip />
      <Tools items={fileTools} />
      <Divider />
      <Tools items={printTools} />
      <Divider />
      <Tools items={editTools} />
      <Divider />
      <UndoGroup>
        <PlainButton title="放弃"><Icon size={14}><F d="M1 6L7 1V4C13 4 15 8 14.500 13C12.500 9 11 8.500 7 8.500V11Z" k="#c9cdd2" /></Icon></PlainButton>
        <PlainButton title="放弃列表"><Caret /></PlainButton>
        <PlainButton title="重做"><Icon size={14}><F d="M15 6L9 1V4C3 4 1 8 1.500 13C3.500 9 5 8.500 9 8.500V11Z" k="#c9cdd2" /></Icon></PlainButton>
        <PlainButton title="重做列表"><Caret /></PlainButton>
      </UndoGroup>
      <Divider />
      <Tools items={viewTools} />
      <Divider />
      <Tools items={paletteTools} />
      <Divider />
      <Tools items={[['帮助', helpIcon]]} />
      <Grip $gap />
      {['Standard', 'ISO-25', 'Standard', 'Standard'].map((value, i) => (
        <React.Fragment key={styleNames[i]}>
          {i > 0 && <Divider />}
          <Tools items={[[styleNames[i], styleIcons[i]]]} />
          <Picker name={styleNames[i]} w={99} value={value} code />
        </React.Fragment>
      ))}
    </ToolGroup>
  </ToolRow>
);

const LayerRow = () => (
  <ToolRow>
    <ToolGroup>
      <Grip />
      <Tools items={[['图层特性', <>{layersIcon}<F d="M9 8H16V16H9Z" k="#6db6ef" /><S d="M10 10.500H15M10 13.500H15" k="#24507a" /></>]]} />
      <Picker name="图层" w={301} value="0" code>
        <Icon><circle cx={8} cy={6.500} r={5.500} fill="#f5c23a" /><F d="M5.500 11H10.500V15H5.500Z" k="#f5c23a" /></Icon>
        <Icon><circle cx={8} cy={8} r={4} fill="#f5c23a" /><S d="M8 .500V3M8 13V15.500M.500 8H3M13 8H15.500M2.500 2.500L4.500 4.500M11.500 11.500L13.500 13.500M13.500 2.500L11.500 4.500M4.500 11.500L2.500 13.500" k="#f5c23a" w={1.800} /></Icon>
        <Icon><S d="M5 4.500H13.500V14.500H4.500V6" w={1.300} /><S d="M3.500 0V7M0 3.500H7M1 1L6 6M6 1L1 6" k="#b9c4d0" /></Icon>
        <Icon><S d="M2.500 9V4C2.500 1 7.500 1 7.500 4V8" k="#58b4ef" w={1.800} /><F d="M6 8H15V15H6Z" k="#58b4ef" /><S d="M10.500 10V13" k="#17324a" w={1.500} /></Icon>
        <Swatch />
      </Picker>
      <Tools
        items={[
          ['将对象的图层置为当前', <>{layersIcon}<circle cx={6} cy={3} r={3} fill="#b9d2ec" /></>],
          ['上一个图层', <><S d="M8 5.500H13L15 8.500H1L2 5.500M1 11.500H15M1 8.500V14.500H15V8.500" /><S d="M0 2.500H7M3 0L.500 2.500L3 5" k={c.gold} w={1.200} /></>],
          ['图层状态', <>{layersIcon}<F d="M8 7H16V16H8Z" k="#34506c" /><S d="M8.500 7.500H15.500V15.500H8.500ZM10 10.500H14M10 13.500H14" k="#6db6ef" /></>],
        ]}
      />
      <Grip $gap />
      <Picker name="颜色" w={154} value="随层"><Swatch /></Picker>
      <Divider />
      <Picker name="线型" w={168} value="随层"><LineSample $w={66} /></Picker>
      <Divider />
      <Picker name="线宽" w={122} value="随层"><LineSample $w={41} /></Picker>
      <Divider />
      <Picker name="打印样式" w={116} value="随颜色" dim />
    </ToolGroup>
  </ToolRow>
);

const SideStack = ({ items, gap }: { items: Tool[]; gap?: boolean }) => (
  <>
    <SideGrip $gap={gap} />
    {items.map(([name, art]) => (
      <SideButton key={name} title={name}>
        <Icon>{art}</Icon>
      </SideButton>
    ))}
  </>
);

const Drawing = () => (
  <Document>
    <TabStrip>
      <TabMenu title="文档列表"><Caret /></TabMenu>
      <FileTab>
        <Icon>
          <path d="M3 0H11L15 4V16H3Z" fill="#eef4fa" />
          <rect x={0} y={6} width={16} height={7} fill="#1560b8" />
          <S d="M2 7.500V11.500H3.500L4.500 10V9L3.500 7.500ZM6 7.500L7 11.500L8 8.500L9 11.500L10 7.500M14 8H12V11.500H14V10" />
        </Icon>
        <FileName>Drawing1.dwg</FileName>
        <Cross />
      </FileTab>
      <NewTab title="新建图形"><Icon>{fileTools[0][1]}</Icon></NewTab>
    </TabStrip>
    <Canvas>
      <CanvasButtons>
        <PlainButton title="最小化"><svg width={11} height={12}><path d="M1 10.500H10" stroke="#fff" strokeWidth={3} /></svg></PlainButton>
        <PlainButton title="还原"><svg width={10} height={10}><path d="M3 3V1H9V7H7M1 3.500H7V9H1Z" stroke="#fff" strokeWidth={1.500} fill="none" /></svg></PlainButton>
        <PlainButton title="关闭"><Cross size={10} /></PlainButton>
      </CanvasButtons>
      <Crosshair width={97} height={97} aria-hidden="true">
        <path d="M48.500 0V96M0 48.500H96M43.500 43.500H53.500V53.500H43.500Z" stroke="#fff" fill="none" />
      </Crosshair>
      <UcsMark width={180} height={202} viewBox="0 -20 180 202" aria-label="UCS">
        <g stroke="#fff" fill="none">
          <path d="M5.500 154.500H25.500V174.500H5.500Z" />
          <path d="M15.500 154V48M7.500 71L15.500 48L24 71" />
          <path d="M26 163.500H132M108 155L132 163.500L108 172" />
        </g>
        <text x={15.500} y={31} fontSize={33} textAnchor="middle" fill="#fff">Y</text>
        <text x={159} y={176} fontSize={33} textAnchor="middle" fill="#fff">X</text>
      </UcsMark>
    </Canvas>
    <LayoutTabs>
      {['M2 10L7 5L12 10Z', 'M3 3H4V11H3ZM11 3V11L5 7Z', 'M10 3V11L4 7Z', 'M4 3V11L10 7Z', 'M3 3V11L9 7ZM10 3H11V11H10Z'].map((d, i) => (
        <NavButton key={d} title={['菜单', '第一个', '上一个', '下一个', '最后一个'][i]}>
          <svg width={14} height={14}><path d={d} fill={i ? '#8d959f' : '#ffffff'} /></svg>
        </NavButton>
      ))}
      <LayoutTab $w={49} $active>模型</LayoutTab>
      <LayoutTab $w={53}>布局1</LayoutTab>
      <LayoutTab $w={53}>布局2</LayoutTab>
      <LayoutTab $w={30}>+</LayoutTab>
    </LayoutTabs>
  </Document>
);

const Command = () => (
  <CommandPanel>
    <CommandHandle>
      <PlainButton title="关闭"><Cross w={1.2} k="#77808b" /></PlainButton>
    </CommandHandle>
    <CommandBody>
      <CommandLog>
        <CommandLines>
          {[0, 1, 2, 3].map((n) => <li key={n}>命令:</li>)}
        </CommandLines>
        <Scroll $w={16}>
          <ScrollEnd title="向上"><Chevron /></ScrollEnd>
          <Thumb $h={23} $top={18} />
          <ScrollEnd title="向下"><Chevron down /></ScrollEnd>
        </Scroll>
      </CommandLog>
      <CommandInput>
        命令:
        <CommandField />
      </CommandInput>
    </CommandBody>
  </CommandPanel>
);

const Properties = () => (
  <Palette $w={221}>
    <PaletteHeader $indent={12}>
      <PaletteTitle>特性</PaletteTitle>
      <PlainButton title="关闭"><Cross size={10} /></PlainButton>
    </PaletteHeader>
    <SelectionRow>
      <SelectionCombo $w={128}>
        <Choice aria-label="选择"><option>无选择</option></Choice>
        <SelectionCaret><Caret /></SelectionCaret>
      </SelectionCombo>
      <SmallButton title="切换"><Icon><S d="M11 1.500H1.500V11H3M4.500 12V4.500H12V12ZM14 6V14.500H6" /><S d="M8.200 6V11M5.700 8.500H11" k={c.gold} /></Icon></SmallButton>
      <SmallButton title="选择对象"><Icon><S d="M6 4C-1 5 1 14 8 13" k="#b9d2ec" w={1.400} /><F d="M6 0H15V9H6Z" k="#5db4f0" /><F d="M9 6L16 12L13 12.500L14 15L12 15.500L11 13L9 14Z" /></Icon></SmallButton>
      <SmallButton title="快速选择"><Icon><S d="M1.500 1.500L9 9L6.500 9.500L8 13.500L6 14L4.500 10.500L1.500 12Z" /><F d="M12 1L7 9H11L9 15L16 7H12L15 2Z" k="#f2b53a" /></Icon></SmallButton>
    </SelectionRow>
    {groups.map((g) => (
      <Group key={g.title}>
        <GroupHeading>
          {g.title}
          <GroupToggle title="折叠"><Caret k="#e8f0f6" /></GroupToggle>
        </GroupHeading>
        <PropTable>
          <tbody>
            {g.rows.map((r) => (
              <tr key={r.name}>
                <PropName scope="row">{r.name}</PropName>
                <PropValue $dim={g.dim}>
                  <ValueRow>
                    {r.swatch && <SmallSwatch />}
                    {r.line && <LineSample $w={r.line} />}
                    {r.value}
                  </ValueRow>
                </PropValue>
              </tr>
            ))}
          </tbody>
        </PropTable>
      </Group>
    ))}
  </Palette>
);

const Calculator = () => (
  <Palette $w={276}>
    <PaletteHeader $indent={19}>
      <PaletteTitle>计算器</PaletteTitle>
      <PlainButton title="关闭"><Cross size={10} /></PlainButton>
    </PaletteHeader>
    <CalcTools>
      {calcTools.map(([name, art]) => (
        <CalcTool key={name} title={name}><Icon>{art}</Icon></CalcTool>
      ))}
    </CalcTools>
    <CalcBody>
      <CalcColumn>
        <History aria-label="历史记录" />
        <Expression aria-label="表达式" />
        <CalcHeading $top={10}>数字键区&lt;&lt;</CalcHeading>
        <Keys>{numberKeys.map((k) => <Key key={k}>{k}</Key>)}</Keys>
        <CalcHeading $top={17}>科学&lt;&lt;</CalcHeading>
        <Keys>{scienceKeys.map((k) => <Key key={k}>{k}</Key>)}</Keys>
        <CalcHeading $top={17}>变量&lt;&lt;</CalcHeading>
        <VarTools>
          <VarTool title="新建变量" $on><Icon><S d="M3 5C6 3 6 13 9 12M9 5C7 4 5 13 2 12" k="#4fa8e8" w={1.600} /><S d="M12 1V8M8.500 4.500H15.500" k="#e3cf5a" /></Icon></VarTool>
          <VarTool title="编辑变量"><Icon><S d="M3 3C6 1 6 11 9 10M9 3C7 2 5 11 2 10" k="#aab2ba" w={1.400} /><S d="M6 13L14 5" k="#cfd5db" w={2} /></Icon></VarTool>
          <VarTool title="删除变量"><Icon><S d="M3 3C6 1 6 11 9 10M9 3C7 2 5 11 2 10" k="#aab2ba" w={1.400} /><S d="M9 9L14 14M14 9L9 14" k="#cfd5db" /></Icon></VarTool>
          <VarTool title="计算器"><Icon><F d="M3 2H13V14H3Z" /><F d="M4 3H12V5H4Z" k="#8a8f96" /><S d="M4.500 7.500H12M4.500 10H12M4.500 12.500H12" k="#3a424c" dash="1.500 1.500" w={1.400} /></Icon></VarTool>
        </VarTools>
        <TreeBox>
          <Tree>
            <TreeRoot>
              <svg width={9} height={9}><path d="M0 0H9V9H0Z" fill="#eef2f5" /><path d="M2 4.500H7" stroke="#39434e" /></svg>
              <Icon><F d="M1 3H6L8 5H15V14H1Z" k="#f3b566" /><S d="M9 8C12 7 11 15 15 14M15 8C13 7 11 15 8 14" k="#3b9bc4" w={1.500} /></Icon>
              变量样例
            </TreeRoot>
            {variables.map((v, i) => (
              <TreeLeaf key={v}>
                <VarGlyph $bold={i === 0}>{i === 0 ? 'k' : 'x'}</VarGlyph>
                {v}
              </TreeLeaf>
            ))}
          </Tree>
          <Scroll $w={16}>
            <ScrollEnd title="向上"><Chevron /></ScrollEnd>
            <Thumb $h={95} />
            <ScrollEnd title="向下"><Chevron down /></ScrollEnd>
          </Scroll>
        </TreeBox>
        <Detail>
          详细信息
          <History />
        </Detail>
        <CalcHeading $top={10}>单位转换&lt;&lt;</CalcHeading>
        <UnitTable>
          <tbody>
            {units.map(([name, value]) => (
              <tr key={name}>
                <UnitName scope="row">{name}</UnitName>
                <UnitValue>{value}</UnitValue>
              </tr>
            ))}
          </tbody>
        </UnitTable>
      </CalcColumn>
      <Scroll $w={14}>
        <ScrollEnd title="向上"><Chevron /></ScrollEnd>
        <Thumb $h={165} />
        <ScrollEnd title="向下"><Chevron down /></ScrollEnd>
      </Scroll>
    </CalcBody>
  </Palette>
);

export default function App() {
  return (
    <Shell>
      <GlobalStyle />
      <TitleBar>
        <Icon>
          <rect width={16} height={16} rx={1} fill="#1f5fe0" />
          <S d="M3 4.500H8L4 12H7L10 8L10.500 12L14 6" w={1.4} />
        </Icon>
        <TitleText>ZWCAD 2020 试用版 (剩余 30 天) - [Drawing1.dwg]</TitleText>
        <WindowShadow />
        <WindowButton title="最小化"><svg width={10} height={10}><path d="M0 5.500H10" stroke="#111" /></svg></WindowButton>
        <WindowButton title="还原"><svg width={10} height={10}><path d="M2.500 2.500V.500H9.500V7.500H7.500M.500 2.500H7.500V9.500H.500Z" stroke="#111" fill="none" /></svg></WindowButton>
        <WindowButton title="关闭"><svg width={11} height={11}><path d="M.500 .500L10.500 10.500M10.500 .500L.500 10.500" stroke="#111" /></svg></WindowButton>
      </TitleBar>
      <MenuBar>
        {menus.map((m) => <MenuItem key={m}>{m}</MenuItem>)}
      </MenuBar>
      <StandardRow />
      <LayerRow />
      <Main>
        <Workspace>
          <DrawArea>
            <Side>
              <SideTools><SideStack items={drawTools} /></SideTools>
            </Side>
            <Drawing />
            <Side $indent>
              <SideTools>
                <SideStack items={modifyTools} />
                <SideStack items={orderTools} gap />
              </SideTools>
            </Side>
          </DrawArea>
          <Command />
        </Workspace>
        <Properties />
        <Calculator />
      </Main>
      <Watermark>
        <WatermarkTitle>激活 Windows</WatermarkTitle>
        转到“设置”以激活 Windows。
      </Watermark>
      <StatusBar>
        <Coordinates>796.2230, 445.7638, 0.0000</Coordinates>
        <SnapGroup>
          {snapTools.map(([name, on, art]) => (
            <SnapButton key={name} title={name} $on={on} aria-pressed={on}><Icon>{art}</Icon></SnapButton>
          ))}
        </SnapGroup>
        <StatusTools>
          <ScaleGroup>
            <PlainButton title="注释可见性"><Icon>{annotate}</Icon></PlainButton>
            <ScaleButton>1:1<Caret /></ScaleButton>
          </ScaleGroup>
          <PlainButton title="显示注释"><Icon>{annotate}<circle cx={13} cy={12} r={2.800} fill="#f2cf3a" /></Icon></PlainButton>
          <PlainButton title="自动缩放"><Icon>{annotate}<S d="M2 1L4 4L1 5M6 1L4 6" /></Icon></PlainButton>
          <PlainButton title="设置"><Icon><circle cx={8} cy={8} r={4} fill="none" stroke="#4fa8f0" strokeWidth={2} /><S d="M8 .500V3.500M8 12.500V15.500M.500 8H3.500M12.500 8H15.500M2.700 2.700L4.800 4.800M11.200 11.200L13.300 13.300M13.300 2.700L11.200 4.800M4.800 11.200L2.700 13.300" k="#4fa8f0" w={2} /></Icon></PlainButton>
          <PlainButton title="全屏"><Icon><S d="M1.500 5V1.500H5M11 1.500H14.500V5M14.500 11V14.500H11M5 14.500H1.500V11M2 2L6.500 6.500M14 2L9.500 6.500M14 14L9.500 9.500M2 14L6.500 9.500" w={1.200} /></Icon></PlainButton>
        </StatusTools>
      </StatusBar>
    </Shell>
  );
}
